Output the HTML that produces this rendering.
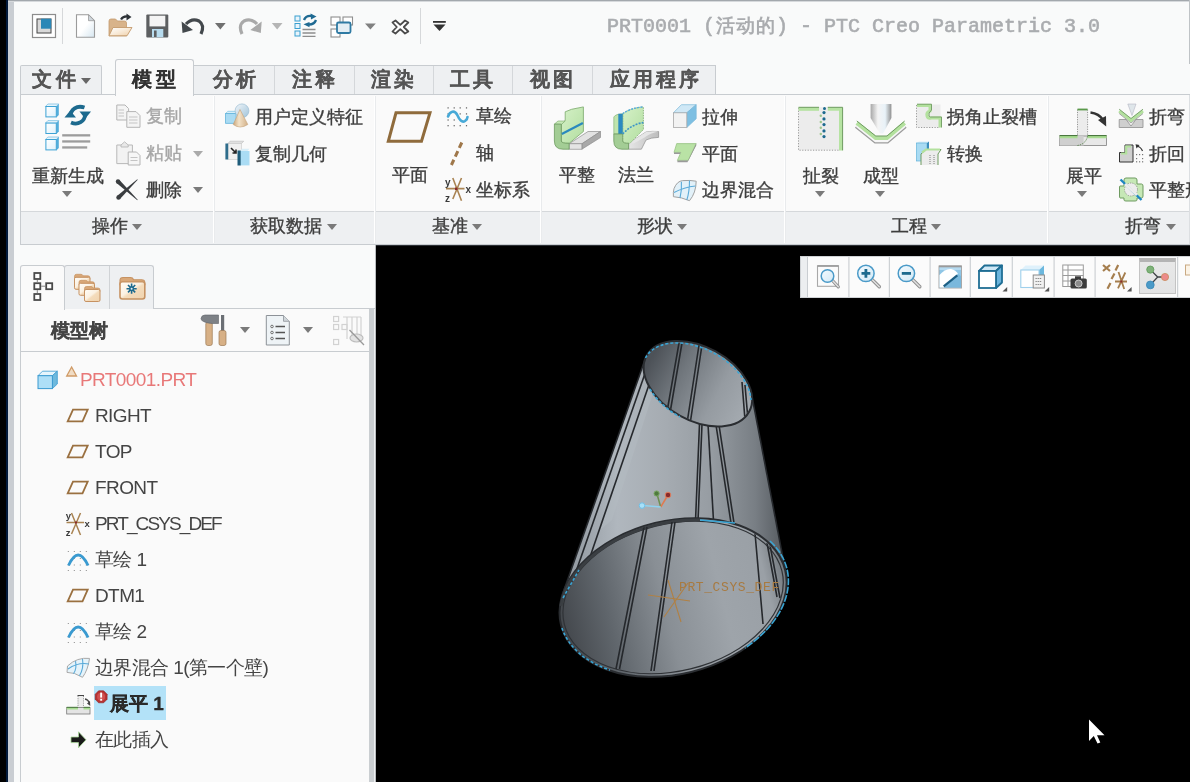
<!DOCTYPE html>
<html><head><meta charset="utf-8">
<style>
*{margin:0;padding:0;box-sizing:border-box}
html,body{width:1190px;height:782px;overflow:hidden;background:#000}
body{position:relative;font-family:"Liberation Sans",sans-serif;color:#3a3a3a}
.a{position:absolute}
.t{position:absolute;white-space:nowrap;font-size:18px;line-height:20px;color:#3e3e3e;will-change:transform;-webkit-text-stroke:0.35px currentColor}
.dis{color:#a6a6a6}
.arr{position:absolute;width:0;height:0;border-left:5px solid transparent;border-right:5px solid transparent;border-top:6px solid #7a7a7a}
svg{position:absolute;overflow:visible}
</style></head><body>
<!-- window frame -->
<div class="a" style="left:6px;top:0;width:2px;height:782px;background:#02193a"></div>
<div class="a" style="left:8px;top:0;width:6px;height:782px;background:#c9cdd2"></div>
<div class="a" style="left:14px;top:0;width:1176px;height:782px;background:#f9fafa"></div>
<div class="a" style="left:8px;top:0;width:1182px;height:1px;background:#a3a8ad"></div>
<div class="a" style="left:8px;top:1px;width:1182px;height:1px;background:#d6d9dc"></div>
<div class="a" style="left:1189px;top:0;width:1px;height:64px;background:#bfc3c6"></div>

<!-- title -->
<div class="a" style="left:607px;top:15px;font-family:'Liberation Mono',monospace;font-weight:normal;-webkit-text-stroke:0.6px #aaacaf;will-change:transform;font-size:20px;line-height:24px;color:#aaacaf;white-space:nowrap">PRT0001 (</div>
<div class="a" style="left:716px;top:14px;font-weight:bold;font-size:19px;line-height:24px;color:#aaacaf;white-space:nowrap;letter-spacing:1px;will-change:transform">活动的</div>
<div class="a" style="left:776px;top:15px;font-family:'Liberation Mono',monospace;font-weight:normal;-webkit-text-stroke:0.6px #aaacaf;will-change:transform;font-size:20px;line-height:24px;color:#aaacaf;white-space:nowrap">) - PTC Creo Parametric 3.0</div>
<!-- quick access separators -->
<div class="a" style="left:62px;top:8px;width:1px;height:36px;background:#d6d8da"></div>
<div class="a" style="left:420px;top:8px;width:1px;height:36px;background:#d6d8da"></div>

<!-- quick access icons -->
<svg style="left:0;top:0" width="460" height="50" viewBox="0 0 460 50">
<defs>
<linearGradient id="gDoc" x1="0" y1="0" x2="1" y2="1"><stop offset="0.5" stop-color="#fff"/><stop offset="1" stop-color="#d6e6f0"/></linearGradient>
<linearGradient id="gFl" x1="0" y1="0" x2="1" y2="1"><stop offset="0" stop-color="#fff"/><stop offset="0.5" stop-color="#f8ead8"/><stop offset="1" stop-color="#efcfa8"/></linearGradient>
</defs>
<!-- window -->
<rect x="32.5" y="14.5" width="23" height="23" fill="#fff" stroke="#8d8d8d" stroke-width="1.2"/>
<rect x="37" y="19" width="14" height="14" fill="#d9d9d9" stroke="#444" stroke-width="1"/>
<rect x="41" y="18.7" width="10.2" height="10" fill="#2b87b6"/>
<!-- new -->
<path d="M76.5,14.7 H88.5 L94.5,20.7 V37.3 H76.5Z" fill="url(#gDoc)" stroke="#9b9b9b" stroke-width="1.1"/>
<path d="M88.5,14.7 V20.7 H94.5Z" fill="#cfd6dc" stroke="#9b9b9b" stroke-width="0.8"/>
<!-- open -->
<path d="M109,21 Q109,19 111,19 H115.5 L117.5,21 H124.5 Q126.5,21 126.5,23 V35.8 H109Z" fill="#d8b38a" stroke="#c49a6c" stroke-width="0.8"/>
<path d="M109,35.8 L113,27.5 H132 L127,35.8Z" fill="url(#gFl)" stroke="#c49a6c" stroke-width="0.9"/>
<path d="M121,19.5 Q123,16 127.5,16.5" stroke="#2e3338" stroke-width="2.2" fill="none"/>
<path d="M126.5,13.5 L131.5,17 L126.5,20.5Z" fill="#2e3338"/>
<!-- save -->
<rect x="146.3" y="14.4" width="22" height="23.2" rx="1" fill="#5d5f61"/>
<rect x="149.5" y="15.7" width="15.8" height="10.7" fill="#f4f4f4"/>
<rect x="152" y="29" width="11.3" height="8.2" fill="#b8dcef"/>
<rect x="154" y="30.5" width="2.6" height="6.5" fill="#5d5f61"/>
<!-- undo -->
<path d="M186,24 Q192,17.5 199,21 Q205,25 201,34" stroke="#43484c" stroke-width="3.2" fill="none"/>
<path d="M181.6,21.5 L182.5,33 L193,30Z" fill="#43484c"/>
<path d="M215,23 H225.7 L220.35,29.5Z" fill="#707070"/>
<!-- redo -->
<path d="M257,24 Q251,17.5 244,21 Q238,25 242,34" stroke="#a9a9a9" stroke-width="3.2" fill="none"/>
<path d="M261.7,21.5 L260.8,33 L250.3,30Z" fill="#a9a9a9"/>
<path d="M271.8,23 H282.5 L277.15,29.5Z" fill="#b5b5b5"/>
<!-- regen -->
<g fill="#e8f4fb" stroke="#3a9fd0" stroke-width="1">
<rect x="295" y="16" width="5" height="5"/><rect x="295" y="23.5" width="5" height="5"/><rect x="295" y="31" width="5" height="5"/>
</g>
<g stroke="#8d8d8d" stroke-width="1.3"><path d="M302.5,29.5 H315.5 M302.5,33 H315.5 M302.5,36.3 H315.5"/></g>
<path d="M304,20 Q306,15 312,16" stroke="#1f6a92" stroke-width="2.4" fill="none"/>
<path d="M310.5,13.5 L316.5,16.5 L311,19.5Z" fill="#1f6a92"/>
<path d="M316,20 Q314,25 308,24.5" stroke="#1f6a92" stroke-width="2.4" fill="none"/>
<path d="M309.5,22 L303.5,24.3 L309.5,27.3Z" fill="#1f6a92"/>
<!-- windows -->
<g fill="#fff" stroke="#8f8f8f" stroke-width="1.1">
<rect x="331" y="17" width="9" height="8"/><rect x="343" y="17" width="9.5" height="8"/><rect x="331" y="29" width="9" height="8"/>
</g>
<rect x="337" y="22.5" width="13.5" height="10.5" rx="1.5" fill="#e4eef4" stroke="#2f7aa3" stroke-width="1.8"/>
<path d="M365,23.5 H375.8 L370.4,29.5Z" fill="#808080"/>
<!-- close -->
<path d="M392.5,22.5 L395.5,20.5 L400.3,24.8 L405,20.5 L408.3,22.5 L403.8,27 L408.3,31.5 L405,33.5 L400.3,29.2 L395.5,33.5 L392.5,31.5 L396.8,27Z" fill="#fff" stroke="#4a4a4a" stroke-width="1.8" stroke-linejoin="round"/>
<!-- dropdown -->
<rect x="433" y="21" width="12.8" height="1.8" fill="#333"/>
<path d="M433.5,24.5 H445.5 L439.5,31Z" fill="#333"/>
</svg>

<!-- tabs -->
<div class="a" style="left:20px;top:65px;width:82px;height:30px;background:#eef0f2;border:1px solid #c8ccd0;border-bottom:none;border-radius:2px 2px 0 0"></div>
<div class="t" style="left:32px;top:68px;font-size:19.5px;line-height:22px;font-weight:bold;-webkit-text-stroke:0.2px currentColor;letter-spacing:3.5px;color:#555">文件</div>
<div class="arr" style="left:81px;top:78px;border-top-color:#666"></div>
<div class="a" style="left:193px;top:65px;width:523px;height:30px;background:#eef0f2;border:1px solid #c8ccd0;border-bottom:none"></div>
<div class="a" style="left:274px;top:66px;width:1px;height:28px;background:#d4d7da"></div>
<div class="a" style="left:354px;top:66px;width:1px;height:28px;background:#d4d7da"></div>
<div class="a" style="left:433px;top:66px;width:1px;height:28px;background:#d4d7da"></div>
<div class="a" style="left:512px;top:66px;width:1px;height:28px;background:#d4d7da"></div>
<div class="a" style="left:592px;top:66px;width:1px;height:28px;background:#d4d7da"></div>
<div class="t" style="left:213px;top:68px;font-size:19.5px;line-height:22px;font-weight:bold;-webkit-text-stroke:0.2px currentColor;letter-spacing:3px;color:#555">分析</div>
<div class="t" style="left:292px;top:68px;font-size:19.5px;line-height:22px;font-weight:bold;-webkit-text-stroke:0.2px currentColor;letter-spacing:3px;color:#555">注释</div>
<div class="t" style="left:371px;top:68px;font-size:19.5px;line-height:22px;font-weight:bold;-webkit-text-stroke:0.2px currentColor;letter-spacing:3px;color:#555">渲染</div>
<div class="t" style="left:450px;top:68px;font-size:19.5px;line-height:22px;font-weight:bold;-webkit-text-stroke:0.2px currentColor;letter-spacing:3px;color:#555">工具</div>
<div class="t" style="left:530px;top:68px;font-size:19.5px;line-height:22px;font-weight:bold;-webkit-text-stroke:0.2px currentColor;letter-spacing:3px;color:#555">视图</div>
<div class="t" style="left:610px;top:68px;font-size:19.5px;line-height:22px;font-weight:bold;-webkit-text-stroke:0.2px currentColor;letter-spacing:3px;color:#555">应用程序</div>

<!-- ribbon body -->
<div class="a" style="left:20px;top:94px;width:1170px;height:151px;background:#fafafa;border:1px solid #c8ccd0;border-right:none"></div>
<div class="a" style="left:21px;top:211px;width:1169px;height:33px;background:#eef0f2;border-top:1px solid #d5d8db"></div>
<!-- active tab -->
<div class="a" style="left:115px;top:59px;width:79px;height:37px;background:#fafafa;border:1px solid #c8ccd0;border-bottom:none;border-radius:3px 3px 0 0"></div>
<div class="t" style="left:132px;top:68px;font-size:19.5px;line-height:22px;font-weight:bold;-webkit-text-stroke:0.2px currentColor;letter-spacing:4px;color:#333">模型</div>

<!-- group separators -->
<div class="a" style="left:1189px;top:95px;width:1px;height:149px;background:#dcdfe2"></div>
<div class="a" style="left:213px;top:96px;width:1px;height:147px;background:#ffffff"></div><div class="a" style="left:214px;top:96px;width:1px;height:147px;background:#e9ebed"></div>
<div class="a" style="left:374px;top:96px;width:1px;height:147px;background:#ffffff"></div><div class="a" style="left:375px;top:96px;width:1px;height:147px;background:#e9ebed"></div>
<div class="a" style="left:540px;top:96px;width:1px;height:147px;background:#ffffff"></div><div class="a" style="left:541px;top:96px;width:1px;height:147px;background:#e9ebed"></div>
<div class="a" style="left:784px;top:96px;width:1px;height:147px;background:#ffffff"></div><div class="a" style="left:785px;top:96px;width:1px;height:147px;background:#e9ebed"></div>
<div class="a" style="left:1047px;top:96px;width:1px;height:147px;background:#ffffff"></div><div class="a" style="left:1048px;top:96px;width:1px;height:147px;background:#e9ebed"></div>

<!-- ribbon icons 1 -->
<svg style="left:0;top:0" width="380" height="210" viewBox="0 0 380 210">
<defs>
<linearGradient id="gCube" x1="0" y1="0" x2="1" y2="1"><stop offset="0" stop-color="#ffffff"/><stop offset="1" stop-color="#dff1fb"/></linearGradient>
<linearGradient id="gSph" x1="0" y1="0" x2="1" y2="1"><stop offset="0" stop-color="#f2f6f9"/><stop offset="1" stop-color="#9fc3da"/></linearGradient>
<linearGradient id="gCone" x1="0" y1="0" x2="1" y2="0"><stop offset="0" stop-color="#c9a57a"/><stop offset="0.4" stop-color="#f3e2c8"/><stop offset="1" stop-color="#d2b088"/></linearGradient>
<g id="cube">
<path d="M0,2.5 L2.5,0 H13.4 L10.9,2.5Z" fill="#e6f4fb" stroke="#5ab0dc" stroke-width="0.6"/>
<path d="M10.9,2.5 L13.4,0 V10.9 L10.9,13.4Z" fill="#52addb"/>
<rect x="0.5" y="2.5" width="10.4" height="10.4" fill="url(#gCube)" stroke="#3da2d4" stroke-width="1"/>
</g>
</defs>
<!-- regen -->
<use href="#cube" x="45.4" y="104"/>
<use href="#cube" x="45.4" y="120.6"/>
<use href="#cube" x="45.4" y="137"/>
<g fill="#9c9c9c"><rect x="62.2" y="134.2" width="28" height="2.3"/><rect x="62.2" y="140.3" width="28" height="2.3"/><rect x="62.2" y="146.3" width="25" height="2.3"/></g>
<path d="M70.2,117 C70.5,109 77,105 84.5,107.5" stroke="#1d6a8e" stroke-width="3.8" fill="none"/>
<path d="M79.5,111.5 H91 L85.2,118.8Z" fill="#1d6a8e"/>
<path d="M85.2,114 C85,121.5 78,125.5 71,122.5" stroke="#1d6a8e" stroke-width="3.8" fill="none"/>
<path d="M64.5,117.5 H76 L70.2,110.5Z" fill="#1d6a8e"/>
<!-- copy (disabled) -->
<g stroke="#b4b4b4" stroke-width="1" fill="#f4f4f4">
<path d="M116.8,105 H125 L128.6,108.6 V120 H116.8Z"/>
<path d="M126.8,111.6 H136 L140,115.6 V127.3 H126.8Z"/>
</g>
<g stroke="#c4c4c4" stroke-width="1"><path d="M118.5,110 H124 M118.5,113 H124 M118.5,116 H124 M129,117 H137.5 M129,120 H137.5 M129,123 H137.5"/></g>
<!-- paste (disabled) -->
<path d="M116.8,145 H132.4 V163.6 H116.8Z" fill="#f2f2f2" stroke="#b8b8b8" stroke-width="1"/>
<path d="M121,145 L124.6,141.8 L128.2,145 V147 H121Z" fill="#e8e8e8" stroke="#b8b8b8" stroke-width="0.9"/>
<path d="M128.2,152 H136.5 L140,155.5 V165 H128.2Z" fill="#f6f6f6" stroke="#b4b4b4" stroke-width="1"/>
<g stroke="#c4c4c4" stroke-width="1"><path d="M130.5,157.5 H137.5 M130.5,160.5 H137.5"/></g>
<!-- delete X -->
<path d="M116.5,183.1 L119.5,179.9 L137.7,199.8 L137.3,200.2Z" fill="#3a3d40"/><circle cx="118" cy="181.5" r="2.2" fill="#3a3d40"/>
<path d="M137.3,179.3 L137.7,179.7 L120,199.1 L117,195.9Z" fill="#3a3d40"/><circle cx="118.5" cy="197.5" r="2.2" fill="#3a3d40"/>
<!-- user defined feature -->
<path d="M225.6,113.5 L227.8,111.3 H237.5 L235.3,113.5Z" fill="#d7eef9" stroke="#6ab8de" stroke-width="0.6"/>
<rect x="225.6" y="113.5" width="10.5" height="9.8" fill="#a9dbf3" stroke="#62b3da" stroke-width="0.8"/>
<circle cx="242" cy="110.8" r="6.9" fill="url(#gSph)" stroke="#8db4cc" stroke-width="0.6"/>
<path d="M240,109.5 L233.2,124.5 Q240,129.5 247.8,124.5Z" fill="url(#gCone)" stroke="#c4a178" stroke-width="0.6"/>
<!-- copy geometry -->
<path d="M228,143.5 L230,141.2 H243.7 L241.5,143.5Z" fill="#e0e0e0" stroke="#bbb" stroke-width="0.6"/>
<rect x="228" y="143.5" width="13.5" height="16" fill="#f0f0f0" stroke="#c8c8c8" stroke-width="0.6"/>
<rect x="225.4" y="143.5" width="2.8" height="16" fill="#2f6d8c"/>
<path d="M231,148 L236,153 M236,149.5 V153 H232.5" stroke="#222" stroke-width="1.6" fill="none"/>
<path d="M240,151 L242,148.8 H249.5 L247.5,151Z" fill="#d9eef8"/>
<rect x="240.2" y="151" width="9.3" height="14.4" fill="#aadcf4"/>
<rect x="237.5" y="150.5" width="3.2" height="15" fill="#1f5c7a"/>
</svg>

<!-- ribbon icons 2 -->
<svg style="left:0;top:0" width="1190" height="210" viewBox="0 0 1190 210">
<defs>
<linearGradient id="gGrn" x1="0" y1="0" x2="1" y2="1"><stop offset="0" stop-color="#d6f1c8"/><stop offset="1" stop-color="#b2dea0"/></linearGradient>
<linearGradient id="gGry" x1="0" y1="0" x2="1" y2="0"><stop offset="0" stop-color="#e6e6e6"/><stop offset="1" stop-color="#bdbdbd"/></linearGradient>
</defs>
<!-- datum plane -->
<path d="M396,112.8 H430 L421.5,141.3 H388.3Z" fill="none" stroke="#8f6b3c" stroke-width="3"/>
<!-- sketch -->
<g fill="#5a5a5a">
<rect x="447.5" y="107.3" width="1.2" height="1.2"/><rect x="453.6" y="107.3" width="1.2" height="1.2"/><rect x="459.6" y="107.3" width="1.2" height="1.2"/><rect x="465.9" y="107.3" width="1.2" height="1.2"/>
<rect x="447.5" y="113.3" width="1.2" height="1.2"/><rect x="459.6" y="113.3" width="1.2" height="1.2"/><rect x="465.9" y="113.3" width="1.2" height="1.2"/>
<rect x="447.5" y="119.4" width="1.2" height="1.2"/><rect x="453.6" y="119.4" width="1.2" height="1.2"/><rect x="465.9" y="119.4" width="1.2" height="1.2"/>
<rect x="447.5" y="125.1" width="1.2" height="1.2"/><rect x="453.6" y="125.1" width="1.2" height="1.2"/><rect x="459.6" y="125.1" width="1.2" height="1.2"/><rect x="465.9" y="125.1" width="1.2" height="1.2"/>
</g>
<path d="M448,116.5 C450,111 454.5,110 457,114.5 C459.5,120 462,123 465,121 C467,119.5 467.5,118 467.5,117" stroke="#47a9d7" stroke-width="2.6" fill="none" stroke-linecap="round"/>
<!-- axis -->
<path d="M461.8,142.5 L451.4,165" stroke="#9f774a" stroke-width="3" stroke-dasharray="6 3.5"/>
<!-- csys -->
<g stroke="#a98352" stroke-width="1.6"><path d="M446,188.6 H464.5 M452.8,178 L461.5,200.7 M461.5,178 L452.8,199"/></g>
<rect x="455" y="187.6" width="2.4" height="2.4" fill="#8a2a2a"/>
<g font-family="Liberation Sans" font-weight="bold" font-size="10" fill="#3a3a3a"><text x="445" y="185.5">y</text><text x="445" y="201.5">z</text><text x="465.5" y="193">x</text></g>
<!-- planar sheet -->
<path d="M569.1,143.8 L588,131.5 L600.5,131.5 L581.9,143.8Z" fill="#e2e2e2" stroke="#8e8e8e" stroke-width="0.7"/>
<path d="M581.9,143.8 L600.5,131.5 V137.5 L581.9,149.2Z" fill="#a9a9a9" stroke="#8e8e8e" stroke-width="0.7"/>
<rect x="569.1" y="143.8" width="12.8" height="5.4" fill="#e4e4e4" stroke="#8e8e8e" stroke-width="0.7"/>
<path d="M561.3,124.5 L565.2,120.2 V111.8 L571.6,109.3 L583.4,106.9 V131.5 L569.1,143.3 H561.3Z" fill="url(#gGrn)" stroke="#79a86a" stroke-width="0.8"/>
<path d="M554.4,124.1 L558,121 H565.2 L561.3,124.5Z" fill="#c8eab8" stroke="#79a86a" stroke-width="0.6"/>
<path d="M554.4,124.1 H561.3 V141 Q561.3,143.3 569.1,143.3 V149.2 H563 Q554.4,149.2 554.4,141Z" fill="#a3cd95" stroke="#6f9b61" stroke-width="0.8"/>
<path d="M561.8,133.9 L582.9,123.1" stroke="#2a89be" stroke-width="2.2"/>
<!-- flange -->
<path d="M628.6,143.3 L646,132 Q652,131 658.6,131.5 V137.4 Q651,137.5 646,140 L641.4,149.2 H628.6Z" fill="url(#gGry)" stroke="#8e8e8e" stroke-width="0.7"/>
<path d="M646,132 Q652,131 658.6,131.5 Q650,133 644.5,137.5 L634,143.3 H628.6Z" fill="#e6e6e6"/>
<path d="M622.7,113.8 Q630,108 643.4,106.9 V129.5 L630,143.3 H622.7Z" fill="url(#gGrn)" stroke="#79a86a" stroke-width="0.8" stroke-dasharray="1.5 1"/>
<path d="M613.8,117 Q616,113.8 622.7,113.8 V134 H613.8Z" fill="#bfe4ad" stroke="#79a86a" stroke-width="0.6"/>
<rect x="618.3" y="113.8" width="4.4" height="20.5" fill="#2b8ac0"/>
<path d="M613.8,134 H622.7 V141 Q622.7,143.3 628.6,143.3 V149.2 H622 Q613.8,149.2 613.8,141Z" fill="#a3cd95" stroke="#6f9b61" stroke-width="0.8"/>
<path d="M622.7,134 Q632,124 643.4,122.6" stroke="#3b95c8" stroke-width="1.6" fill="none" stroke-dasharray="2 1.2"/>
<path d="M622.7,113.8 Q630,108 643.4,106.9" stroke="#5aaedc" stroke-width="1.4" fill="none" stroke-dasharray="2 1.2"/>
<!-- extrude -->
<path d="M673.4,112.8 L681.4,104.7 H696.2 L686.8,112.8Z" fill="#cfe8f6" stroke="#7ab7d8" stroke-width="0.7"/>
<path d="M686.8,112.8 L696.2,104.7 V118.8 L686.8,127.5Z" fill="#7dbfe2" stroke="#7ab7d8" stroke-width="0.7"/>
<rect x="673.4" y="112.8" width="13.4" height="14.7" fill="#f2f2f2" stroke="#a8a8a8" stroke-width="0.8"/>
<!-- flat wall -->
<path d="M676.7,143.6 H696.2 L688.1,160.4 H677.4 L680.8,152.4 H674Z" fill="#b9e2a5" stroke="#8fbf7a" stroke-width="0.7"/>
<path d="M674,152.4 V154 H680 L680.8,152.4Z M677.4,160.4 V162.3 H687.5 L688.1,160.4Z" fill="#9a9a9a"/>
<path d="M688.1,160.4 L696.2,143.6 V145.5 L687.5,162.3Z" fill="#8a8a8a"/>
<!-- boundary blend -->
<path d="M674,188.6 Q677,181 682.8,180.6 Q690,180 696.2,181.2 Q696,193 689.5,200.7 Q681,197 673.4,196.7 Q673,192 674,188.6Z" fill="#e2f1f9" stroke="#a0a0a0" stroke-width="1"/>
<path d="M681.4,181.9 Q682,190 680,198 M689.5,180.6 Q689.5,192 686.8,200 M674,192.6 Q684,187 695.5,186" stroke="#5aaad8" stroke-width="1.1" fill="none"/>
</svg>

<!-- ribbon icons 3 -->
<svg style="left:0;top:0" width="1190" height="210" viewBox="0 0 1190 210">
<defs>
<linearGradient id="gPun" x1="0" y1="0" x2="1" y2="0"><stop offset="0" stop-color="#a8a8a8"/><stop offset="0.35" stop-color="#f4f4f4"/><stop offset="0.7" stop-color="#e8f2f8"/><stop offset="1" stop-color="#909090"/></linearGradient>
</defs>
<!-- rip -->
<rect x="798.5" y="107.2" width="44" height="43" fill="#ececec"/>
<path d="M798.5,108 V150.2 H839" stroke="#9a9a9a" stroke-width="1" stroke-dasharray="1.2 1.5" fill="none"/>
<path d="M798.5,109 H819" stroke="#b6e3a2" stroke-width="3.6"/>
<path d="M798.5,107.3 H819" stroke="#6f9b61" stroke-width="1"/>
<path d="M827.8,109 H840.8 V150.4" stroke="#b6e3a2" stroke-width="3.6" fill="none"/>
<path d="M827.8,107.3 H842.6 V150.4" stroke="#6f9b61" stroke-width="1" fill="none"/>
<g fill="#1d6a8e"><circle cx="824.5" cy="108.5" r="1.5"/><circle cx="824" cy="112.6" r="1.6"/><circle cx="824" cy="118.9" r="1.6"/><circle cx="824" cy="124.6" r="1.6"/><circle cx="824" cy="130.9" r="1.6"/><circle cx="824" cy="136.6" r="1.6"/></g>
<g fill="#9cc58c"><circle cx="820.8" cy="115.8" r="1.2"/><circle cx="820.8" cy="122" r="1.2"/><circle cx="820.8" cy="127.7" r="1.2"/><circle cx="820.8" cy="134" r="1.2"/></g>
<!-- form -->
<path d="M856.8,123 L875.7,138 H887 L904.7,123" stroke="#9c9c9c" stroke-width="6" fill="none" transform="translate(0,2.5)"/>
<path d="M856.8,123 L875.7,138 H887 L904.7,123" stroke="#f6f6f6" stroke-width="3.5" fill="none" transform="translate(0,2.5)"/>
<path d="M856.8,123 L875.7,138 H887 L904.7,123" stroke="#b3e19e" stroke-width="4" fill="none"/>
<path d="M856.8,121 L875.7,136 H887 L904.7,121" stroke="#6f9b61" stroke-width="1" fill="none"/>
<path d="M870.6,104 H891.4 V118 L883,133.4 H880 L870.6,118Z" fill="url(#gPun)"/>
<!-- corner relief -->
<rect x="916.5" y="104.5" width="24" height="23" fill="#ececec"/>
<path d="M916.5,105 V127.5 H940" stroke="#9a9a9a" stroke-width="1" stroke-dasharray="1.2 1.5" fill="none"/>
<path d="M917,105.5 H930 V111 Q926,112 927,116 Q928,119 931,118 H940 V127.5" stroke="#b3e19e" stroke-width="3" fill="none"/>
<path d="M917,104.2 H931.5 V110 Q928,113 929,116 Q930,117.5 932,117 H941.5 V127.5" stroke="#6f9b61" stroke-width="0.9" fill="none"/>
<!-- convert -->
<path d="M916.5,143 L919,141.5 H929 L926.5,143Z" fill="#d9eef9"/>
<rect x="916.5" y="143" width="10.5" height="18" fill="#a9dbf3" stroke="#62b3da" stroke-width="0.7"/>
<path d="M927,143 L929,141.5 V158 L927,161Z" fill="#3c8fbd"/>
<path d="M921,165 V154 L926,149.5 H941 L938,154 V165" fill="#ececec" stroke="#6f9b61" stroke-width="1"/>
<path d="M922,152.5 L926,149.5 H940" stroke="#b3e19e" stroke-width="2.2" fill="none"/>
<path d="M930,155 V165 M934,155 V165" stroke="#666" stroke-width="0.8" stroke-dasharray="1 1"/>
<!-- unbend -->
<rect x="1077.5" y="108.7" width="10" height="27.5" fill="#ececec"/>
<path d="M1077.5,109.5 V136 M1087.6,109.5 V136" stroke="#8a8a8a" stroke-width="0.9" stroke-dasharray="1.2 1.2"/>
<path d="M1077.5,109.5 H1087.6" stroke="#5a9a4a" stroke-width="1.8"/>
<rect x="1059.6" y="136" width="47" height="9.5" fill="#e8e8e8" stroke="#808080" stroke-width="0.8"/>
<rect x="1059.6" y="136" width="24" height="9.5" fill="#cfcfcf"/>
<path d="M1059.6,137 H1077.5 M1087.6,137 H1106.6" stroke="#a8dc92" stroke-width="2.4"/>
<path d="M1059.6,135.6 H1077.5 M1087.6,135.6 H1106.6" stroke="#3e6e32" stroke-width="1"/>
<path d="M1077.5,145.5 Q1086,144 1087.6,136" stroke="#4e7e42" stroke-width="0.9" fill="none" stroke-dasharray="1.2 1"/>
<path d="M1090.5,112.5 Q1099,113.5 1103,120" stroke="#333" stroke-width="2.6" fill="none"/>
<path d="M1098,120 L1106.2,126.5 L1106,116Z" fill="#333"/>
<!-- bend -->
<path d="M1119.2,119.5 H1126 L1131,126 L1136,119.5 H1143 V127.5 H1119.2Z" fill="#cfcfcf" stroke="#8e8e8e" stroke-width="0.8"/>
<path d="M1119.2,111 L1131,120.5 L1143,111" stroke="#b3e19e" stroke-width="3" fill="none"/>
<path d="M1119.2,109.2 L1131,118.5 L1143,109.2" stroke="#6f9b61" stroke-width="0.9" fill="none"/>
<path d="M1119.2,113.5 L1131,123 L1143,113.5" stroke="#8e8e8e" stroke-width="0.8" fill="none"/>
<path d="M1127.8,104 H1136 L1132,115.5Z" fill="#dfe6ea" stroke="#aab" stroke-width="0.5"/>
<!-- edge bend back -->
<path d="M1119.5,162 V152.5 H1125 V145 H1133 V162Z" fill="#cfcfcf" stroke="#333" stroke-width="1"/>
<path d="M1121,153.5 H1126.2 V146.5 H1131" stroke="#b3e19e" stroke-width="2.2" fill="none"/>
<g fill="#777"><rect x="1136" y="154" width="1.2" height="1.2"/><rect x="1139" y="154" width="1.2" height="1.2"/><rect x="1142" y="154" width="1.2" height="1.2"/><rect x="1136" y="158" width="1.2" height="1.2"/><rect x="1142" y="158" width="1.2" height="1.2"/><rect x="1136" y="161.2" width="1.2" height="1.2"/><rect x="1139" y="161.2" width="1.2" height="1.2"/><rect x="1142" y="161.2" width="1.2" height="1.2"/></g>
<path d="M1137,146 Q1141,147 1142.5,151" stroke="#333" stroke-width="1.2" fill="none"/>
<path d="M1135.5,144.2 L1139.5,145 L1136.5,148.5Z" fill="#333"/>
<!-- flatten form -->
<path d="M1120,186 H1124 V180 Q1124,178 1126,178 H1135 Q1137,178 1137,180 V184 H1141.5 Q1143,184 1143,186 V196 Q1143,198 1141.5,198 H1137 V200 Q1137,201 1135,201 H1126 Q1124,201 1124,200 V198 H1120 Q1119.5,198 1119.5,196 V187 Q1119.5,186 1120,186Z" fill="#c6e8b6" stroke="#6f9b61" stroke-width="1"/>
<circle cx="1131" cy="189.5" r="6.5" fill="#ececec" stroke="#888" stroke-width="0.8" stroke-dasharray="1.2 1.2"/>
<path d="M1120.5,179.5 L1141.5,200" stroke="#1e86c2" stroke-width="2.4"/>
<path d="M1125,184 L1137,195" stroke="#ececec" stroke-width="3"/>
</svg>

<!-- ribbon texts -->
<div class="t" style="left:32px;top:166px">重新生成</div>
<div class="arr" style="left:62px;top:191px"></div>
<div class="t dis" style="left:146px;top:106px">复制</div>
<div class="t dis" style="left:146px;top:143px">粘贴</div>
<div class="arr" style="left:193px;top:151px;border-top-color:#aaa"></div>
<div class="t" style="left:146px;top:180px">删除</div>
<div class="arr" style="left:193px;top:187px"></div>
<div class="t" style="left:255px;top:107px">用户定义特征</div>
<div class="t" style="left:255px;top:144px">复制几何</div>
<div class="t" style="left:392px;top:165px">平面</div>
<div class="t" style="left:476px;top:106px">草绘</div>
<div class="t" style="left:476px;top:143px">轴</div>
<div class="t" style="left:476px;top:180px">坐标系</div>
<div class="t" style="left:559px;top:165px">平整</div>
<div class="t" style="left:618px;top:165px">法兰</div>
<div class="t" style="left:702px;top:107px">拉伸</div>
<div class="t" style="left:702px;top:144px">平面</div>
<div class="t" style="left:702px;top:180px">边界混合</div>
<div class="t" style="left:803px;top:166px">扯裂</div>
<div class="arr" style="left:815px;top:191px"></div>
<div class="t" style="left:863px;top:166px">成型</div>
<div class="arr" style="left:875px;top:191px"></div>
<div class="t" style="left:947px;top:107px">拐角止裂槽</div>
<div class="t" style="left:947px;top:144px">转换</div>
<div class="t" style="left:1066px;top:166px">展平</div>
<div class="arr" style="left:1077px;top:191px"></div>
<div class="t" style="left:1149px;top:107px">折弯</div>
<div class="t" style="left:1149px;top:144px">折回</div>
<div class="t" style="left:1149px;top:180px">平整形</div>

<!-- group labels -->
<div class="t" style="left:92px;top:216px">操作</div>
<div class="arr" style="left:132px;top:224px"></div>
<div class="t" style="left:250px;top:216px">获取数据</div>
<div class="arr" style="left:327px;top:224px"></div>
<div class="t" style="left:432px;top:216px">基准</div>
<div class="arr" style="left:472px;top:224px"></div>
<div class="t" style="left:637px;top:216px">形状</div>
<div class="arr" style="left:677px;top:224px"></div>
<div class="t" style="left:891px;top:216px">工程</div>
<div class="arr" style="left:931px;top:224px"></div>
<div class="t" style="left:1125px;top:216px">折弯</div>
<div class="arr" style="left:1166px;top:224px"></div>

<!-- graphics area -->
<div class="a" style="left:376px;top:245px;width:814px;height:537px;background:#000"></div>
<div class="a" style="left:375px;top:245px;width:1px;height:537px;background:#b9bcbf"></div>

<!-- left panel -->
<div class="a" style="left:20px;top:308px;width:355px;height:474px;background:#fafafa;border-left:1px solid #c8ccd0;border-top:1px solid #c8ccd0"></div>
<div class="a" style="left:369px;top:309px;width:5px;height:473px;background:#caced1"></div><div class="a" style="left:374px;top:309px;width:1px;height:473px;background:#eef0f1"></div>
<div class="a" style="left:21px;top:351px;width:348px;height:1px;background:#c8ccd0"></div>
<!-- panel tabs -->
<div class="a" style="left:64px;top:265px;width:90px;height:44px;background:#eef0f2;border:1px solid #c8ccd0;border-bottom:none;border-radius:3px 3px 0 0"></div>
<div class="a" style="left:109px;top:266px;width:1px;height:43px;background:#d0d3d6"></div>
<div class="a" style="left:20px;top:265px;width:45px;height:45px;background:#fafafa;border:1px solid #c8ccd0;border-bottom:none;border-radius:3px 3px 0 0"></div>
<div class="t" style="left:51px;top:320px;font-weight:bold;font-size:19px;line-height:22px;color:#454545">模型树</div>
<div class="arr" style="left:240px;top:327px"></div>
<div class="arr" style="left:303px;top:327px"></div>

<!-- tree texts -->
<div class="t" style="left:80px;top:369.5px;font-size:19px;letter-spacing:-0.6px;-webkit-text-stroke:0;color:#e87878">PRT0001.PRT</div>
<div class="t" style="left:95px;top:406px;font-size:19px;letter-spacing:-0.6px;-webkit-text-stroke:0;color:#444">RIGHT</div>
<div class="t" style="left:95px;top:442px;font-size:19px;letter-spacing:-0.6px;-webkit-text-stroke:0;color:#444">TOP</div>
<div class="t" style="left:95px;top:478px;font-size:19px;letter-spacing:-0.6px;-webkit-text-stroke:0;color:#444">FRONT</div>
<div class="t" style="left:95px;top:514px;font-size:19px;letter-spacing:-1.9px;-webkit-text-stroke:0;color:#444">PRT_CSYS_DEF</div>
<div class="t" style="left:95px;top:550px;font-size:19px;letter-spacing:-0.6px;-webkit-text-stroke:0;color:#444">草绘 1</div>
<div class="t" style="left:95px;top:586px;font-size:19px;letter-spacing:-0.6px;-webkit-text-stroke:0;color:#444">DTM1</div>
<div class="t" style="left:95px;top:622px;font-size:19px;letter-spacing:-0.6px;-webkit-text-stroke:0;color:#444">草绘 2</div>
<div class="t" style="left:95px;top:658px;font-size:19px;letter-spacing:-0.6px;-webkit-text-stroke:0;color:#444">边界混合 1(第一个壁)</div>
<div class="a" style="left:94px;top:686px;width:72px;height:34px;background:#b3e2f8"></div>
<div class="t" style="left:110px;top:694px;font-size:19px;font-weight:bold;color:#2a2a2a">展平 1</div>
<div class="t" style="left:95px;top:730px;font-size:19px;letter-spacing:-0.6px;-webkit-text-stroke:0;color:#444">在此插入</div>


<!-- 3D model -->
<svg style="left:0;top:0" width="1190" height="782" viewBox="0 0 1190 782">
<defs>
<linearGradient id="gOut" gradientUnits="userSpaceOnUse" x1="560" y1="0" x2="790" y2="0">
<stop offset="0" stop-color="#8c939a"/><stop offset="0.25" stop-color="#b0b7be"/><stop offset="0.45" stop-color="#a6acb2"/><stop offset="0.65" stop-color="#979da3"/><stop offset="0.85" stop-color="#787e84"/><stop offset="1" stop-color="#4e5358"/>
</linearGradient>
<linearGradient id="gInB" gradientUnits="userSpaceOnUse" x1="560" y1="0" x2="790" y2="0">
<stop offset="0" stop-color="#44484d"/><stop offset="0.2" stop-color="#60666c"/><stop offset="0.45" stop-color="#898f95"/><stop offset="0.7" stop-color="#9ea4aa"/><stop offset="0.9" stop-color="#9aa0a6"/><stop offset="1" stop-color="#70767b"/>
</linearGradient>
<linearGradient id="gInT" gradientUnits="userSpaceOnUse" x1="645" y1="0" x2="752" y2="0">
<stop offset="0" stop-color="#4d5258"/><stop offset="0.3" stop-color="#6f757b"/><stop offset="0.7" stop-color="#959ba1"/><stop offset="1" stop-color="#a3a9af"/>
</linearGradient>
<clipPath id="cB"><ellipse cx="673.1" cy="597.5" rx="114" ry="75.5" transform="rotate(-13.7 673.1 597.5)"/></clipPath>
<clipPath id="cT"><ellipse cx="697.9" cy="383.7" rx="57.5" ry="36" transform="rotate(28.8 697.9 383.7)"/></clipPath>
</defs>
<path d="M562.8,593.6 L645.2,359.1 A58.4,36.8 28.8 0 1 751.4,393.4 L785.8,572.8 A115.4,76.6 -13.7 1 1 562.8,593.6Z" fill="url(#gOut)"/>
<!-- highlight strip near left -->
<path d="M650,380 L660,372 L612,520 L600,530Z" fill="#b4bbc2" opacity="0.5"/>
<g stroke="#25282c" stroke-width="1.6" fill="none">
<path d="M562.8,593.6 L645.2,359.1"/>
<path d="M567.5,596 L649,362"/>
<path d="M578,592 L653,373"/>
<path d="M699.5,424 L695.5,521 M702,424 L698,521"/>
<path d="M708,424 L713.5,521"/>
<path d="M716,425 L731,523 M719,425 L734,523"/>
<path d="M751.4,393.4 L785.8,572.8"/>
</g>
<ellipse cx="673.1" cy="597.5" rx="115.4" ry="76.6" transform="rotate(-13.7 673.1 597.5)" fill="url(#gInB)" stroke="#2a2d31" stroke-width="2"/>
<ellipse cx="673.1" cy="597.5" rx="112" ry="73.5" transform="rotate(-13.7 673.1 597.5)" fill="none" stroke="#2f3236" stroke-width="1.2"/>
<path d="M561,606 A115.4,76.6 -13.7 0 1 700,520" stroke="#3a3e42" stroke-width="3" fill="none"/>
<g clip-path="url(#cB)" stroke="#25282c" stroke-width="1.6" fill="none">
<path d="M644,527 L616,669 M647,527 L619.5,669"/>
<path d="M672,522 L651,671 M675,522 L654,671"/>
<path d="M755,533 L763,624 M767,543 L777,597 M770,545 L780,598"/>
</g>
<ellipse cx="697.9" cy="383.7" rx="58.4" ry="36.8" transform="rotate(28.8 697.9 383.7)" fill="url(#gInT)" stroke="#2a2d31" stroke-width="2"/>
<g clip-path="url(#cT)" stroke="#25282c" stroke-width="1.6" fill="none">
<path d="M679,343 L667.5,409 M682,343 L670.5,410"/>
<path d="M699,345 L687.5,420 M702,345 L690.5,421"/>
<path d="M745,385 L748,420 M742,382 L745,420"/>
</g>
<!-- blue highlighted edges -->
<g stroke="#3aa6d6" stroke-width="1.6" fill="none" stroke-dasharray="3 2">
<path d="M645.5,358 A58.4,36.8 28.8 0 1 751,400"/>
<path d="M650,389 A58.4,36.8 28.8 0 0 680,417"/>
<path d="M700,520 L735,523" stroke-dasharray="none"/>
<path d="M770,541 A115.4,76.6 -13.7 0 1 745,648" stroke-dasharray="7 1.5"/>
<path d="M562,628 A115.4,76.6 -13.7 0 0 610,670"/>
<path d="M563,598 L579,570"/>
</g>
<!-- csys triad -->
<g stroke-width="1.5" fill="none">
<path d="M660.7,507 L657,494" stroke="#6b8f4f"/>
<path d="M660.7,507 L668,495" stroke="#e07a50"/>
<path d="M660.7,507 L643,505.5" stroke="#8fd3f0"/>
</g>
<circle cx="656.6" cy="493.5" r="2.6" fill="#4f7a3e" stroke="#79a862" stroke-width="1"/>
<circle cx="668" cy="495" r="2.8" fill="#8a2a2a" stroke="#e08060" stroke-width="1"/>
<circle cx="642" cy="505.6" r="2.8" fill="#a8e0f8" stroke="#70c0e8" stroke-width="1"/>
<!-- csys def -->
<g stroke="#b08044" stroke-width="1.1" fill="none">
<path d="M648,595 L690,601"/>
<path d="M668,580 L681,622"/>
<path d="M688,583 L664,617"/>
</g>
<text x="679" y="591" font-family="Liberation Mono" font-size="13" fill="#a87a40" letter-spacing="0.6">PRT_CSYS_DEF</text>
</svg>

<!-- panel icons -->
<svg style="left:0;top:0" width="380" height="782" viewBox="0 0 380 782">
<defs>
<linearGradient id="gFold" x1="0" y1="0" x2="1" y2="1"><stop offset="0" stop-color="#fffdf8"/><stop offset="0.45" stop-color="#fbf1e2"/><stop offset="0.55" stop-color="#f4dcbc"/><stop offset="1" stop-color="#f0d3ae"/></linearGradient>
<g id="fold">
<path d="M0.5,3 Q0.5,1 2.5,1 H7 Q8.5,1 9,2.5 H14 Q16,2.5 16,4.5 V6 H0.5Z" fill="#d9a878" stroke="#c69262" stroke-width="0.7"/>
<rect x="0.5" y="4" width="15.5" height="12" rx="1.5" fill="url(#gFold)" stroke="#c69262" stroke-width="1"/>
</g>
<g id="plane"><path d="M1,12.5 L6.3,0.8 H21 L15.8,12.5Z" fill="none" stroke="#9a7040" stroke-width="1.8"/></g>
<g id="sk">
<g fill="#8a8a8a"><rect x="0.5" y="0" width="1" height="1"/><rect x="6.5" y="0" width="1" height="1"/><rect x="12.5" y="0" width="1" height="1"/><rect x="18.5" y="0" width="1" height="1"/>
<rect x="6.5" y="7" width="1" height="1"/><rect x="12.5" y="7" width="1" height="1"/>
<rect x="0.5" y="13.5" width="1" height="1"/><rect x="6.5" y="13.5" width="1" height="1"/><rect x="12.5" y="13.5" width="1" height="1"/><rect x="18.5" y="13.5" width="1" height="1"/>
<rect x="0.5" y="19" width="1" height="1"/><rect x="6.5" y="19" width="1" height="1"/><rect x="12.5" y="19" width="1" height="1"/><rect x="18.5" y="19" width="1" height="1"/></g>
<path d="M1.2,14.5 Q10.8,-6.5 20.8,14.5" stroke="#3a9ad0" stroke-width="2.8" fill="none"/>
</g>
</defs>
<!-- tab 1 tree -->
<g fill="#fff" stroke="#4a4a4a" stroke-width="1.8">
<rect x="34.3" y="273" width="6" height="6"/><rect x="34.3" y="283.2" width="6" height="6"/><rect x="34.3" y="294" width="6" height="6"/><rect x="46.2" y="283.2" width="6" height="6"/>
</g>
<path d="M37.3,279.9 V282.3 M37.3,290.1 V293.1 M41.2,286.2 H45.3" stroke="#777" stroke-width="0.9"/>
<!-- tab 2 folders -->
<use href="#fold" x="74" y="273.3"/>
<use href="#fold" x="78.5" y="279.3"/>
<use href="#fold" x="84" y="285.5"/>
<!-- tab 3 folder -->
<g transform="translate(119.2,276.2) scale(1.6,1.42)"><use href="#fold"/></g>
<g stroke="#1d6a8e" stroke-width="1.6"><path d="M126.5,288.7 H136.7 M131.6,283.6 V293.8 M128,285 L135.2,292.4 M135.2,285 L128,292.4"/></g>
<circle cx="131.6" cy="288.7" r="2.4" fill="#1d6a8e"/><circle cx="131.6" cy="288.7" r="1" fill="#e8f4fb"/>
<!-- header: tools -->
<rect x="221" y="315" width="3.2" height="17" fill="#6b6f74"/>
<rect x="219" y="330.5" width="7" height="15" rx="2" fill="#d7b086" stroke="#9c7a55" stroke-width="0.7"/>
<rect x="205.8" y="322" width="6.5" height="23.5" rx="2" fill="#d7b086" stroke="#9c7a55" stroke-width="0.7"/>
<path d="M201,318.5 Q201.5,315 205,315 H218.5 V323.5 H212 Q206,323 203.5,321.5 Q201,320.5 201,318.5Z" fill="#7d8186" stroke="#5f6368" stroke-width="0.6"/>
<!-- header: list doc -->
<path d="M266.3,315.5 H283.5 L289.3,321.3 V345 H266.3Z" fill="#eef3f6" stroke="#8d9298" stroke-width="1"/>
<path d="M283.5,315.5 V321.3 H289.3" fill="#d0d6da" stroke="#8d9298" stroke-width="0.8"/>
<g fill="none" stroke="#666" stroke-width="0.9"><circle cx="272" cy="326.5" r="1.3"/><circle cx="272" cy="332.5" r="1.3"/><circle cx="272" cy="338.5" r="1.3"/></g>
<path d="M275.5,326.5 H285 M275.5,332.5 H285 M275.5,338.5 H285" stroke="#555" stroke-width="1.3"/>
<!-- header: disabled tree -->
<g fill="none" stroke="#d2d2d2" stroke-width="1.2"><rect x="333.6" y="316.5" width="5" height="5"/><rect x="333.6" y="324.5" width="5" height="5"/><rect x="333.6" y="339.5" width="5" height="5"/><rect x="342" y="324.5" width="5" height="5"/>
<path d="M343,317 H361 M347,317 V339 M352,317 V339 M357,317 V339 M361,317 V339"/></g>
<ellipse cx="356.5" cy="338" rx="6.5" ry="4" fill="#e2e2e2" stroke="#bdbdbd" stroke-width="1.2"/>
<path d="M349.5,330 L364,345" stroke="#9a9a9a" stroke-width="1.3"/>
<!-- tree -->
<path d="M38,375.7 L42.5,371.2 H57.3 L52.4,375.7Z" fill="#e6f5fc" stroke="#3a9ad0" stroke-width="0.8"/>
<path d="M52.4,375.7 L57.3,371.2 V384 L52.4,388.6Z" fill="#6db9dd" stroke="#3a9ad0" stroke-width="0.8"/>
<rect x="38" y="375.7" width="14.4" height="12.9" fill="#aedff7" stroke="#3a9ad0" stroke-width="1"/>
<path d="M71.6,367 L76.5,376 H66.7Z" fill="#f0dcc4" stroke="#cf9a66" stroke-width="1.3"/>
<use href="#plane" x="66.7" y="408.8"/>
<use href="#plane" x="66.7" y="444.8"/>
<use href="#plane" x="66.7" y="480.8"/>
<use href="#plane" x="66.7" y="588.8"/>
<!-- csys -->
<g stroke="#a98352" stroke-width="1.5"><path d="M66.5,522.5 H84 M71.5,513 L80.5,535 M80.5,513 L71.5,534"/></g>
<rect x="75" y="521.5" width="2" height="2" fill="#8a2a2a"/>
<g font-family="Liberation Sans" font-weight="bold" font-size="9.5" fill="#3a3a3a"><text x="65.8" y="519">y</text><text x="65.8" y="535.5">z</text><text x="84.5" y="526.5">x</text></g>
<use href="#sk" x="67.3" y="551"/>
<use href="#sk" x="67.3" y="623"/>
<!-- boundary blend -->
<path d="M67.5,666 Q77,657 89.5,658.4 Q88,670 82.5,677.3 Q74,672 67,672.4Z" fill="#e5f3fa" stroke="#a8a8a8" stroke-width="1"/>
<path d="M68,669 Q78,662 89,664 M75.5,661.2 Q77,669 73.5,673.8 M82.5,659 Q84,668 79.5,675.8" stroke="#5aaad8" stroke-width="1.1" fill="none"/>
<!-- unbend small -->
<rect x="78" y="695.5" width="5.5" height="12" fill="#ececec"/>
<path d="M78,696 V707.5 M83.5,696 V707.5" stroke="#8a8a8a" stroke-width="0.9" stroke-dasharray="1.1 1.1"/>
<path d="M77.5,695.5 H84" stroke="#444" stroke-width="1"/>
<rect x="66.7" y="707.5" width="23.3" height="6.5" fill="#e4e4e4" stroke="#777" stroke-width="0.8"/>
<path d="M66.7,708.6 H78 M83.5,708.6 H90" stroke="#a8dc92" stroke-width="2"/>
<path d="M66.7,707.3 H78 M83.5,707.3 H90" stroke="#3e6e32" stroke-width="0.9"/>
<path d="M85,699 Q88,699.5 89.5,703" stroke="#444" stroke-width="1.3" fill="none"/>
<path d="M87,703.5 L90.3,706 L90,701Z" fill="#444"/>
<!-- highlight bg -->
<!-- error icon -->
<path d="M98.6,690.8 H103.6 L107.1,694.3 V699.3 L103.6,702.8 H98.6 L95.2,699.3 V694.3Z" fill="#b83232" stroke="#8a1e1e" stroke-width="0.6"/>
<circle cx="101.1" cy="696.8" r="4" fill="#d05050"/>
<rect x="100.2" y="692.6" width="1.9" height="5" fill="#fff"/><rect x="100.2" y="698.8" width="1.9" height="1.9" fill="#fff"/>
<!-- insert arrow -->
<path d="M71,737 H78.5 V731.8 L86,739.8 L78.5,747.8 V742.6 H71Z" fill="#1a1a1a" stroke="#a8d898" stroke-width="0.8"/>
</svg>

<!-- view toolbar -->
<div class="a" style="left:376px;top:245px;width:814px;height:1px;background:#2c3035"></div>
<div class="a" style="left:800px;top:256px;width:390px;height:42px;background:#fbfbfb;border:1px solid #cfd2d5;border-right:none"></div>
<div class="a" style="left:801px;top:257px;width:7px;height:40px;background:#eceef0;border-right:1.5px solid #c9cdd1"></div>
<div class="a" style="left:1139px;top:258px;width:37px;height:36px;background:linear-gradient(#e8e8e8,#e2e3e4);border:1px solid #c4c4c4;border-top:4px solid #b4b4b4"></div>
<svg style="left:0;top:0" width="1190" height="300" viewBox="0 0 1190 300">
<defs>
<linearGradient id="gMag" x1="0" y1="0" x2="1" y2="1"><stop offset="0" stop-color="#f6fbfe"/><stop offset="1" stop-color="#d2e9f6"/></linearGradient>
<linearGradient id="gRef" x1="0" y1="0" x2="1" y2="1"><stop offset="0.35" stop-color="#ffffff"/><stop offset="0.5" stop-color="#a8d4ec"/><stop offset="1" stop-color="#6aaed6"/></linearGradient>
</defs>
<g fill="#cdd1d4"><rect x="848.3" y="257" width="1.2" height="40"/><rect x="888.8" y="257" width="1.2" height="40"/><rect x="929.5" y="257" width="1.2" height="40"/><rect x="969.7" y="257" width="1.2" height="40"/><rect x="1011.7" y="257" width="1.2" height="40"/><rect x="1053.5" y="257" width="1.2" height="40"/><rect x="1094.5" y="257" width="1.2" height="40"/><rect x="1177" y="257" width="1.2" height="40"/></g>
<!-- zoom fit -->
<rect x="817.5" y="265.8" width="21" height="20.5" fill="#fbfbfb" stroke="#a8a8a8" stroke-width="1.1"/>
<rect x="817.5" y="265.2" width="21" height="1.6" fill="#9a9a9a"/>
<path d="M832.5,280.5 L838.3,286.8" stroke="#8e8e8e" stroke-width="3.2" stroke-linecap="round"/>
<path d="M832.5,280.5 L838.3,286.8" stroke="#e2e2e2" stroke-width="1.4" stroke-linecap="round"/>
<circle cx="827.5" cy="276" r="6.3" fill="url(#gMag)" stroke="#4a9ac8" stroke-width="1.5"/>
<!-- zoom in -->
<path d="M871.5,279 L879.3,286.8" stroke="#8e8e8e" stroke-width="3.4" stroke-linecap="round"/>
<path d="M871.5,279 L879.3,286.8" stroke="#e2e2e2" stroke-width="1.5" stroke-linecap="round"/>
<circle cx="865.9" cy="273.4" r="8.2" fill="url(#gMag)" stroke="#4a9ac8" stroke-width="1.5"/>
<path d="M861.5,273.4 H870.3 M865.9,269 V277.8" stroke="#1d6a8e" stroke-width="2.8"/>
<!-- zoom out -->
<path d="M912,279 L919.8,286.8" stroke="#8e8e8e" stroke-width="3.4" stroke-linecap="round"/>
<path d="M912,279 L919.8,286.8" stroke="#e2e2e2" stroke-width="1.5" stroke-linecap="round"/>
<circle cx="906.4" cy="273.4" r="8.2" fill="url(#gMag)" stroke="#4a9ac8" stroke-width="1.5"/>
<path d="M901.8,273.4 H911" stroke="#1d6a8e" stroke-width="2.8"/>
<!-- refit -->
<rect x="939" y="266" width="22.5" height="22" fill="#8fc6e6" stroke="#a8a8a8" stroke-width="1"/>
<rect x="939.5" y="267" width="21.5" height="3" fill="#b5daf0"/>
<path d="M939.5,275 Q945,268.5 951,269 Q956,270 958,274 L944,287.5 H939.5Z" fill="#ffffff"/>
<path d="M958,274 L944,287.5 H961 V276Z" fill="#7ab8dc"/>
<rect x="939" y="265.5" width="22.5" height="1.8" fill="#9a9a9a"/>
<path d="M943.7,286.4 L957.3,275.3" stroke="#1d5f84" stroke-width="2.2"/>
<!-- view cube -->
<path d="M979,271 L984.5,265.5 H1002 L996,271Z" fill="#cfe8f6" stroke="#1f6e94" stroke-width="1.8" stroke-linejoin="round"/>
<path d="M996,271 L1002,265.5 V282.5 L996,288Z" fill="#6ab4dc" stroke="#1f6e94" stroke-width="1.8" stroke-linejoin="round"/>
<rect x="979" y="271" width="17" height="17" fill="#fff" stroke="#1f6e94" stroke-width="1.8"/>
<path d="M1007.2,286.9 V291.6 H1002.5Z" fill="#555"/>
<!-- saved views -->
<path d="M1020.8,270 L1025.5,265.5 H1044 L1039,270Z" fill="#dff1fb"/>
<path d="M1039,270 L1044,265.5 V283 L1039,287.5Z" fill="#6cb8de"/>
<rect x="1020.8" y="270" width="18.2" height="17.5" fill="#fff" stroke="#9fd0ec" stroke-width="1.1"/>
<rect x="1033.2" y="275" width="11.2" height="13" fill="#f0f0f0" stroke="#8a8a8a" stroke-width="1"/>
<path d="M1035.5,278.5 H1042 M1035.5,281.5 H1042 M1035.5,284.5 H1042" stroke="#7a7a7a" stroke-width="0.9" stroke-dasharray="1.3 0.8"/>
<path d="M1049.2,287 V291.6 H1044.5Z" fill="#555"/>
<!-- table camera -->
<rect x="1062.8" y="265" width="20.5" height="21.5" fill="#fff" stroke="#9a9a9a" stroke-width="1"/>
<path d="M1062.8,270 H1083.3 M1062.8,275.5 H1083.3 M1062.8,281 H1072 M1068,265 V286.5" stroke="#9a9a9a" stroke-width="1"/>
<rect x="1070.5" y="278.5" width="16.3" height="10" rx="1.5" fill="#3c3c3c"/>
<rect x="1075" y="276.3" width="6" height="3" fill="#3c3c3c"/>
<circle cx="1078.6" cy="283.5" r="3.5" fill="#8c8c8c" stroke="#e0e0e0" stroke-width="0.8"/>
<!-- datum display -->
<g stroke="#a57e4e" stroke-width="2.2"><path d="M1103,265 L1110,271 M1110,265 L1103,271"/>
<path d="M1118.2,265 L1115.5,270.5 M1114.5,273.5 L1111.5,279 M1110.5,283 L1107.5,288.8"/>
<path d="M1115,281.5 H1127 M1118.5,272 L1124.2,289 M1125.3,272.5 L1118,288.3" stroke-width="1.8"/></g>
<rect x="1120.3" y="280.5" width="2" height="2" fill="#8a2a2a"/>
<path d="M1131.6,287 V291.6 H1127Z" fill="#555"/>
<!-- triad -->
<path d="M1150.3,269.6 L1157.7,277 H1165 M1157.7,277 L1150.3,284.9" stroke="#3e4246" stroke-width="1.3" fill="none"/>
<circle cx="1150.3" cy="269.6" r="3.6" fill="#7fb27a" stroke="#5e9a58" stroke-width="0.8"/>
<circle cx="1165" cy="277" r="3.6" fill="#ec8a8a" stroke="#c98a5a" stroke-width="0.8"/>
<circle cx="1150.3" cy="284.9" r="3.9" fill="#4a9ac8" stroke="#3a88b6" stroke-width="0.8"/>
<!-- partial next -->
<rect x="1185.5" y="265" width="6" height="10" fill="#fbf3e6" stroke="#c9a982" stroke-width="1"/>
</svg>
<!-- cursor -->
<svg style="left:1088px;top:719px" width="20" height="28" viewBox="0 0 20 28">
<path d="M1,0.5 V22 L5.8,17 L9.5,24.5 L12.3,23.5 L9,16.3 H16.5Z" fill="#fff"/>
</svg>
</body></html>
